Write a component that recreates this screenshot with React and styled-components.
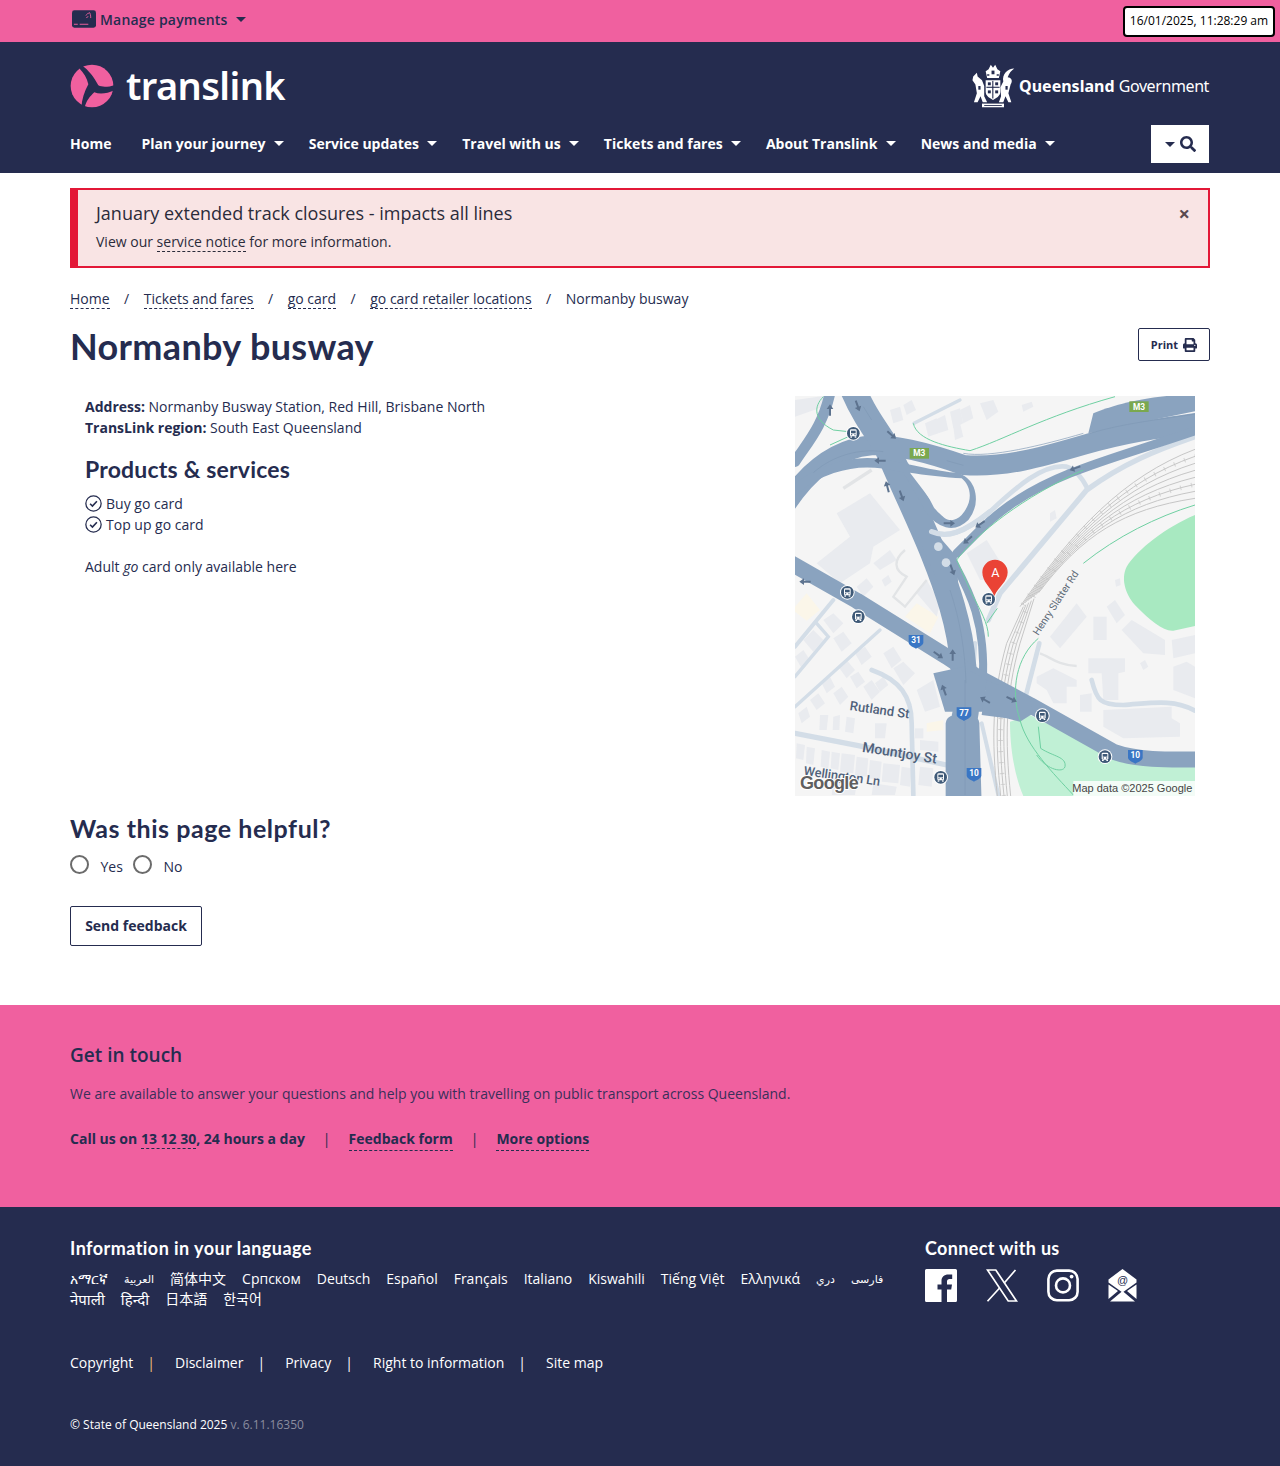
import React from "react"
import styled, { createGlobalStyle } from "styled-components"
import { FaSearch, FaPrint } from "react-icons/fa"

const NAVY = "#252c4f"
const PINK = "#f0609f"
const HEADING = `"Lato", "Noto Sans", sans-serif`

const Global = createGlobalStyle`
  html, body { margin: 0; padding: 0; background: #fff; }
  body { font-family: "Open Sans", "Noto Sans", "Noto Sans CJK SC", "DejaVu Sans", sans-serif; color: ${NAVY}; font-size: 14px; }
  * { box-sizing: border-box; }
`

const Container = styled.div`
  width: 1140px;
  margin: 0 auto;
`

const Top = styled.div`
  position: relative;
  height: 42px;
  background: ${PINK};
`
const TopInner = styled(Container)`
  height: 38px;
  display: flex;
  align-items: center;
  gap: 4px;
  padding-left: 2px;
  font-weight: 600;
  font-size: 14px;
  letter-spacing: 0.2px;
  color: ${NAVY};
`
const DateChip = styled.div`
  position: absolute;
  top: 6px;
  left: 1123px;
  width: 152px;
  height: 31px;
  background: #fff;
  border: 2px solid #000;
  border-radius: 4px;
  color: #000;
  font-size: 12px;
  line-height: 25px;
  text-align: center;
  white-space: nowrap;
`
const Caret = styled.span`
  display: inline-block;
  width: 0;
  height: 0;
  margin-left: ${p => p.$gap ?? 8}px;
  border-left: 5px solid transparent;
  border-right: 5px solid transparent;
  border-top: 5px solid ${p => p.$color || "#fff"};
`

const Header = styled.header`
  background: ${NAVY};
  height: 131px;
`
const BrandRow = styled(Container)`
  height: 83px;
  display: flex;
  justify-content: space-between;
  align-items: center;
  padding-top: 4px;
`
const Brand = styled.div`
  display: flex;
  align-items: center;
  gap: 11px;
`
const BrandName = styled.span`
  font-family: "Noto Sans", sans-serif;
  font-size: 38px;
  font-weight: 600;
  letter-spacing: -0.6px;
  color: #fff;
  line-height: 44px;
  margin-top: -2px;
`
const Gov = styled.div`
  display: flex;
  align-items: center;
  gap: 4px;
  color: #fff;
  font-family: "Noto Sans", sans-serif;
  font-size: 16px;
  margin-right: 1px;
  strong { font-weight: 700; }
`
const GovLight = styled.span`
  letter-spacing: -0.4px;
`
const NavRow = styled(Container)`
  display: flex;
  align-items: center;
  justify-content: space-between;
  height: 38px;
`
const Nav = styled.nav`
  display: flex;
  gap: 25.2px;
  margin-top: -2px;
`
const NavItem = styled.a`
  display: flex;
  align-items: center;
  color: #fff;
  font-weight: 700;
  font-size: 14px;
  white-space: nowrap;
  margin-right: ${p => p.$extra || 0}px;
`
const SearchBtn = styled.button`
  width: 58px;
  height: 38px;
  margin-right: 1px;
  background: #fff;
  border: 0;
  display: flex;
  align-items: center;
  justify-content: center;
  gap: 5px;
  color: ${NAVY};
  padding: 0;
`

const Main = styled(Container)`
  padding-top: 15px;
`
const Alert = styled.div`
  position: relative;
  height: 80px;
  background: #f9e4e4;
  border: 2px solid #e31837;
  border-left-width: 8px;
  padding: 11px 18px;
`
const AlertTitle = styled.div`
  font-size: 18px;
  line-height: 25px;
  color: #2b2b3a;
`
const AlertText = styled.div`
  font-size: 14px;
  line-height: 20px;
  margin-top: 6px;
  color: #2b2b3a;
`
const Dashed = styled.a`
  color: inherit;
  text-decoration: none;
  border-bottom: 1px dashed currentColor;
`
const Close = styled.span`
  position: absolute;
  right: 18px;
  top: 14px;
  font-size: 20px;
  line-height: 20px;
  font-weight: 700;
  color: #5a4a50;
`
const Crumbs = styled.div`
  display: flex;
  margin-top: 21px;
  line-height: 19px;
  font-size: 14px;
`
const Sep = styled.span`
  padding: 0 14.5px;
`
const TitleRow = styled.div`
  display: flex;
  justify-content: space-between;
  align-items: flex-start;
  margin-top: 7px;
  height: 80px;
`
const Title = styled.h1`
  margin: 0;
  font-family: ${HEADING};
  font-size: 36px;
  font-weight: 700;
  letter-spacing: 0.35px;
  line-height: 60px;
`
const PrintBtn = styled.button`
  margin-top: 12px;
  width: 72px;
  height: 33px;
  background: #fff;
  border: 1px solid ${NAVY};
  border-radius: 2px;
  display: flex;
  align-items: center;
  justify-content: center;
  gap: 5px;
  font: 700 11px "Open Sans", sans-serif;
  color: ${NAVY};
`
const Columns = styled.div`
  display: flex;
  justify-content: space-between;
  padding: 0 15px;
`
const Info = styled.div`
  line-height: 21px;
  font-size: 14px;
  b { font-weight: 700; }
`
const Sub = styled.h2`
  margin: 16px 0 0;
  font-family: ${HEADING};
  font-size: 23px;
  font-weight: 700;
  letter-spacing: 0.2px;
  line-height: 30px;
`
const Checks = styled.ul`
  list-style: none;
  margin: 9px 0 0;
  padding: 0;
`
const Check = styled.li`
  display: flex;
  align-items: center;
  gap: 4px;
  height: 21px;
`
const Note = styled.p`
  margin: 21px 0 0;
  line-height: 21px;
`
const Feedback = styled.div`
  margin-top: 16px;
`
const FeedbackTitle = styled.h2`
  margin: 0;
  font-family: ${HEADING};
  font-size: 25px;
  font-weight: 700;
  letter-spacing: 0.55px;
  line-height: 32px;
`
const Radios = styled.div`
  display: flex;
  align-items: center;
  height: 24px;
  margin-top: 9px;
`
const Radio = styled.span`
  width: 19px;
  height: 19px;
  border: 2px solid #6b6b6b;
  border-radius: 50%;
  margin-top: -2px;
`
const RadioLabel = styled.span`
  font-size: 14px;
  color: ${NAVY};
  margin: 2px 10px 0 11.5px;
`
const SendBtn = styled.button`
  display: block;
  margin-top: 29px;
  width: 132px;
  height: 40px;
  padding: 0 0 2px;
  background: #fff;
  border: 1px solid ${NAVY};
  border-radius: 2px;
  font: 700 14px "Open Sans", sans-serif;
  color: ${NAVY};
`
const Touch = styled.section`
  margin-top: 59px;
  height: 202px;
  background: ${PINK};
  padding-top: 36px;
`
const TouchTitle = styled.h3`
  margin: 0;
  font-size: 19px;
  font-weight: 600;
  line-height: 28px;
`
const TouchText = styled.p`
  margin: 14px 0 0;
  line-height: 22px;
  color: #3a2f5a;
`
const TouchLinks = styled.div`
  display: flex;
  margin-top: 23px;
  line-height: 22px;
  font-weight: 700;
`
const Bar = styled.span`
  font-weight: 400;
  padding: 0 18px;
`
const Foot = styled.footer`
  background: ${NAVY};
  height: 259px;
  color: #fff;
  padding-top: 27px;
`
const FootTop = styled(Container)`
  display: flex;
  justify-content: space-between;
  height: 91px;
`
const FootHead = styled.h3`
  margin: 0;
  font-family: ${HEADING};
  font-size: 18px;
  font-weight: 700;
  letter-spacing: ${p => p.$spacing || 0.45}px;
  line-height: 28px;
`
const Langs = styled.div`
  width: 820px;
  display: flex;
  flex-wrap: wrap;
  column-gap: 16px;
  margin-top: 7px;
  line-height: 20px;
  font-size: 14px;
`
const Lang = styled.span`
  font-size: ${p => p.$size || 14}px;
`
const Connect = styled.div`
  width: 285px;
`
const Socials = styled.div`
  display: flex;
  align-items: center;
  gap: 29px;
  margin-top: 6px;
  height: 34px;
`
const LegalRow = styled(Container)`
  display: flex;
  margin-top: 27px;
  line-height: 22px;
`
const LegalBar = styled.span`
  color: ${p => (p.$gold ? "#f2c078" : "#fff")};
  padding: 0 20px 0 14px;
`
const Copy = styled(Container)`
  margin-top: 41px;
  font-size: 12px;
  line-height: 20px;
  span { color: #8b8d9f; }
`

function Logo() {
  return (
    <svg width="45" height="44" viewBox="15 10 135 132" aria-hidden="true">
      <circle cx="81" cy="76" r="64" fill={PINK} />
      <path d="M50 13C72 30 86 48 100 74C115 82 135 78 158 70L158 84C130 99 106 102 88 95C74 108 62 122 58 146L49 144C50 118 58 92 70 71C66 52 56 36 42 22Z" fill={NAVY} />
    </svg>
  )
}

// rough drawing of the coat of arms
function Crest() {
  return (
    <svg width="44" height="44" viewBox="0 0 60 60" aria-hidden="true">
      <g fill="#fff">
        <path d="M3 17 L8 12 L9 17 L15 22 L18 30 L18 44 L22 52 L16 52 L13 44 L9 52 L4 52 L8 40 L6 28 L2 22Z" />
        <path d="M59 6 C50 6 42 14 44 24 L40 32 L41 44 L38 52 L44 52 L47 44 L51 52 L55 52 L51 40 L54 28 C58 22 54 18 50 18 C52 12 55 9 59 6Z" />
        <path d="M20 22 H40 V38 C40 44 34 47 30 49 C26 47 20 44 20 38Z" />
        <path d="M15 54 H45 V59 H15Z" />
        <path d="M20 10 L24 7 L27 1 L30 5 L33 1 L36 7 L40 10 L38 19 H22Z" />
      </g>
      <g fill={NAVY}>
        <rect x="29" y="23" width="1.5" height="24" />
        <rect x="21" y="31" width="18" height="1.5" />
        <rect x="23" y="25" width="4" height="4" />
        <rect x="33" y="25" width="4" height="4" />
        <rect x="23" y="36" width="4" height="4" />
        <rect x="33" y="36" width="4" height="4" />
        <rect x="18" y="56" width="24" height="1.2" />
        <rect x="28" y="9" width="4" height="5" />
        <rect x="22" y="14" width="3" height="2" />
        <rect x="35" y="14" width="3" height="2" />
        <rect x="10" y="30" width="3" height="5" />
        <rect x="47" y="30" width="3" height="5" />
      </g>
    </svg>
  )
}

function CardIcon() {
  return (
    <svg width="24" height="18" viewBox="0 0 25 18" aria-hidden="true">
      <rect width="25" height="18" rx="2.5" fill={NAVY} />
      <path d="M2 14.5h4M8 14.5h9" stroke={PINK} strokeWidth="1" />
      <path d="M15 8c.5-1 1-1.5 2-1.5M14.5 5.5c1-2 2-2.5 3.5-2.5M18 2c1 1 1.5 3 1.5 6" stroke={PINK} strokeWidth=".9" fill="none" />
    </svg>
  )
}

function CheckIcon() {
  return (
    <svg width="17" height="17" viewBox="0 0 16 16" fill="none" stroke={NAVY} aria-hidden="true">
      <circle cx="8" cy="8" r="7.2" strokeWidth="1.2" />
      <path d="M4.8 8.2l2.2 2.2 4.2-4.6" strokeWidth="1.5" />
    </svg>
  )
}

function FacebookIcon() {
  return (
    <svg width="32" height="33" viewBox="0 0 32 33" fill="#fff" aria-hidden="true">
      <path d="M1.5 0H30.5A1.5 1.5 0 0 1 32 1.5V31.5A1.5 1.5 0 0 1 30.5 33H22V20.5H26.2L27 15.5H22V12.5C22 11 22.8 10 24.5 10H27.2V5.5H23.5C19 5.5 16.5 8 16.5 12V15.5H12.5V20.5H16.5V33H1.5A1.5 1.5 0 0 1 0 31.5V1.5A1.5 1.5 0 0 1 1.5 0Z" />
    </svg>
  )
}

function XIcon() {
  return (
    <svg width="32" height="33" viewBox="0 0 32 33" fill="none" stroke="#fff" strokeWidth="1.7" aria-hidden="true">
      <path d="M1.5 1H9.8L30.5 32H22.2Z" />
      <path d="M29.5 1L18 14.2M13.6 19L1.5 32.3" />
    </svg>
  )
}

function InstagramIcon() {
  return (
    <svg width="32" height="33" viewBox="0 0 32 33" fill="none" stroke="#fff" strokeWidth="2.6" aria-hidden="true">
      <rect x="1.4" y="1.6" width="29.2" height="29.6" rx="8.5" />
      <circle cx="16" cy="16.4" r="7" />
      <circle cx="24.6" cy="7.6" r="1.9" fill="#fff" stroke="none" />
    </svg>
  )
}

function MailIcon() {
  return (
    <svg width="29" height="33" viewBox="0 0 29 33" aria-hidden="true">
      <path d="M14.5 0 L28.5 10.5 V13.5 L14.5 23.5 L.5 13.5 V10.5Z" fill="#fff" />
      <path d="M.5 15.5 L10 22 L.5 30Z M28.5 15.5 L19 22 L28.5 30Z M2 32.5 L14.5 22 L27 32.5Z" fill="#fff" />
      <text x="14.5" y="15" textAnchor="middle" fontFamily="Liberation Sans, sans-serif" fontSize="11" fill={NAVY}>@</text>
    </svg>
  )
}

const buildings = [
  "140,370 240,310 330,420 250,470 240,520 150,580 80,520 180,440",
  "300,60 330,50 340,90 310,100", "340,45 365,30 378,60 350,75", "405,100 440,85 445,130 415,140",
  "435,90 465,75 475,120 445,130", "490,110 510,100 520,140 495,150", "480,65 510,55 520,100 490,115",
  "510,60 540,45 550,85 520,100", "570,40 610,30 625,65 590,90", "695,45 725,35 730,50 700,65",
  "780,370 795,360 800,385 780,395", "530,490 590,450 640,530 600,570 570,570",
  "780,740 860,640 890,680 810,775", "910,680 950,680 950,750 910,750", "950,650 975,630 1005,675 980,700",
  "995,720 1025,690 1125,750 1125,795 1060,790", "1145,750 1215,735 1215,790 1150,805",
  "895,805 1005,805 1005,845 985,850 985,930 940,930 935,850 895,850",
  "740,860 790,835 860,870 860,890 830,890 830,940 790,940 770,900 740,880",
  "870,915 905,910 905,965 870,965", "940,960 1145,950 1145,985 1170,1000 1170,1040 1000,1045 940,1010",
  "1150,830 1190,815 1215,830 1215,925 1150,900", "975,570 990,565 992,585 978,590", "1050,820 1065,810 1075,830 1060,840",
  "250,520 300,480 320,510 270,540", "200,590 230,565 250,590 220,620", "275,570 295,555 305,575 285,590",
  "380,610 410,570 450,640 440,680", "15,30 100,18 130,40 15,80",
  "100,690 130,670 160,700 130,730", "130,745 160,725 185,760 155,785", "40,750 70,720 100,750 70,785",
  "15,800 40,780 60,810 35,835", "280,790 310,770 335,810 305,835", "310,835 340,815 375,850 340,885",
  "195,790 225,770 245,800 215,825", "145,830 170,810 195,840 170,865", "180,860 205,845 225,875 200,895",
  "220,890 245,870 270,905 245,930", "255,880 280,860 295,885 270,905", "95,880 120,860 135,890 110,910",
  "130,910 155,890 175,920 150,945", "60,930 85,910 105,940 80,960", "25,970 50,950 60,980 35,1000",
  "90,975 115,975 110,1020 88,1020", "130,980 150,975 148,1020 128,1020", "170,980 195,985 190,1030 165,1025",
  "255,1000 290,1000 285,1045 255,1045", "380,900 430,870 450,950 405,965", "375,1015 400,1015 400,1045 375,1045",
  "390,1050 445,1055 445,1085 390,1080", "20,1060 45,1065 40,1110 18,1105", "50,1070 75,1075 70,1125 48,1120",
  "95,1080 120,1085 115,1135 92,1130", "125,1085 150,1090 145,1140 122,1135", "155,1090 195,1095 190,1150 150,1145",
  "200,1100 235,1105 230,1160 195,1155", "240,1110 275,1115 270,1170 235,1165", "280,1120 330,1125 325,1180 275,1175",
  "335,1130 365,1135 360,1190 330,1185", "390,1130 430,1135 425,1190 385,1185", "130,1165 200,1180 195,1215 125,1215",
  "250,1180 320,1190 315,1215 245,1215",
]
const minorRoads = [
  ["M15 1030L220 1070L470 1125", 16], ["M15 950L270 720", 10], ["M245 840C330 870 365 920 365 1000L370 1215", 14],
  ["M130 630L15 770", 12], ["M80 700L115 740L15 860", 10], ["M575 1000L625 1215", 12], ["M748 760L708 915", 14],
  ["M905 870C920 930 930 945 1000 945C1080 940 1150 925 1215 962", 14], ["M372 100L510 30", 10],
  ["M425 425C470 445 520 430 600 365C680 290 760 220 830 230C860 240 880 270 892 295", 14],
  ["M595 690L630 610L890 300C1000 220 1100 180 1215 140", 16], ["M555 760L550 830", 14],
]
const greenLines = [
  "M100 20C70 50 70 90 130 120L175 125M120 165L175 140", "M370 100C380 150 470 170 540 182C640 150 760 80 975 20",
  "M500 510C560 430 700 320 880 240", "M500 510L545 610C570 660 595 700 595 740", "M745 745C680 800 660 900 690 990C710 1070 790 1150 850 1215",
  "M1215 345C1100 380 980 440 880 520", "M745 1010L752 1075C790 1100 830 1100 825 1130C820 1150 770 1140 740 1095",
  "M590 700L622 655",
]
const laneLines = [
  "M70 248C130 195 210 175 280 185", "M520 190C600 205 760 165 880 130", "M470 212L520 226", "M220 50L245 90",
  "M480 600C510 690 525 780 528 880", "M525 870L525 1215", "M900 130C1000 100 1100 90 1215 72",
]
const arrows = [
  [120, 60, 0], [203, 48, 160], [305, 135, 130], [270, 212, 270], [292, 290, -15], [335, 318, 160], [478, 400, 90],
  [570, 403, 235], [533, 450, 230], [487, 540, 160], [45, 575, 270], [445, 795, 125], [488, 795, 0], [462, 900, -20],
  [585, 930, -60], [665, 928, 115], [855, 235, 250],
]
const stops = [[190, 130], [172, 607], [205, 680], [596, 628], [757, 977], [945, 1100], [452, 1162]]
const shields = [[378, 753, "31"], [522, 970, "77"], [552, 1152, "10"], [1036, 1098, "10"]]
const MAPFONT = "Roboto, Liberation Sans, sans-serif"

function railPath(i) {
  return `M${622 + i * 10} 1218C${605 + i * 10} 1050 ${605 + i * 10} 920 ${650 + i * 10} 760L${700 + i * 8} ${650 - i * 6}`
}
function yardPath(i) {
  return `M${690 + i * 8} ${650 - i * 6}C${850 + i * 4} ${420 + i * 2} 1000 ${260 + i * 14} 1215 ${178 + i * 21}`
}

function BusStop({ x, y }) {
  return (
    <g transform={`translate(${x} ${y})`}>
      <circle r="22" fill="#fff" />
      <circle r="19" fill="#3f5a78" />
      <rect x="-10" y="-12" width="20" height="21" rx="4" fill="#fff" />
      <rect x="-7" y="-8" width="14" height="8" fill="#3f5a78" />
      <circle cx="-5" cy="4" r="2" fill="#3f5a78" />
      <circle cx="5" cy="4" r="2" fill="#3f5a78" />
      <rect x="-9" y="9" width="5" height="4" fill="#fff" />
      <rect x="4" y="9" width="5" height="4" fill="#fff" />
    </g>
  )
}

function RouteShield({ x, y, label }) {
  return (
    <g transform={`translate(${x} ${y})`}>
      <path d="M-22 -18H22V6C18 16 8 18 0 23C-8 18 -18 16 -22 6Z" fill="#3a76c4" />
      <text y="7" textAnchor="middle" fontFamily={MAPFONT} fontWeight="700" fontSize="25" fill="#fff">{label}</text>
    </g>
  )
}

function MotorwaySign({ x, y }) {
  return (
    <g transform={`translate(${x} ${y})`}>
      <rect x="-29" y="-16" width="58" height="32" fill="#7aa84f" />
      <text y="9" textAnchor="middle" fontFamily={MAPFONT} fontWeight="700" fontSize="25" fill="#fff">M3</text>
    </g>
  )
}

function MapDrawing() {
  const road = "#8aa3bf"
  return (
    <svg width="400" height="400" viewBox="15 18 1200 1200" aria-label="Map" style={{ flex: "none" }}>
      <defs>
        <clipPath id="mapclip"><rect x="15" y="18" width="1200" height="1200" /></clipPath>
      </defs>
      <g clipPath="url(#mapclip)">
        <rect x="15" y="18" width="1200" height="1200" fill="#f5f5f5" />
        <path d="M1215 375C1130 410 1040 480 1010 530C990 570 1010 620 1040 650C1080 690 1120 725 1150 722L1215 708Z" fill="#a8e9c1" />
        <path d="M660 995L720 975L1000 1115L1215 1130V1218H700C670 1150 660 1060 660 995Z" fill="#c0f0d5" />
        <g fill="#fbf6e9">
          <polygon points="15,650 50,610 90,660 50,692 15,665" />
          <polygon points="345,680 380,640 445,680 420,730" />
          <polygon points="410,1000 460,990 460,1020 410,1025" />
        </g>
        <g fill="#e9ebef">
          {buildings.map((b, i) => <polygon key={i} points={b} />)}
        </g>
        <g fill="none" stroke="#e2e4e6" strokeWidth="7">
          <path d="M160 295L245 240" strokeWidth="10" />
          <path d="M345 480C310 510 310 540 350 560L310 620L345 650L410 570" />
          <path d="M750 790C780 800 800 825 860 828" />
        </g>
        <g fill="none" stroke="#d3dde7" strokeLinecap="round">
          {minorRoads.map(([d, w], i) => <path key={i} d={d} strokeWidth={w} />)}
        </g>
        <g fill="none" stroke="#c6c6c6" strokeWidth="3">
          {[0, 1, 2, 3, 4].map(i => <path key={i} d={railPath(i)} />)}
          {[0, 1, 2, 3, 4, 5, 6, 7].map(i => <path key={i} d={yardPath(i)} />)}
        </g>
        <g fill="none" stroke="#c6c6c6" strokeWidth="14" strokeDasharray="3 30" opacity=".7">
          <path d={railPath(2)} />
          <path d={yardPath(1)} />
          <path d={yardPath(5)} />
        </g>
        <g fill="none" stroke={road} strokeLinejoin="round" strokeLinecap="round">
          <path d="M-10 340C50 250 130 175 250 165C330 165 420 190 520 225C640 235 760 200 880 165C1000 130 1100 115 1245 95" strokeWidth="60" />
          <path d="M15 215C50 160 100 110 122 0" strokeWidth="32" />
          <path d="M190 0C220 70 250 110 290 170C340 290 390 390 430 490C470 590 510 700 520 830C530 900 535 950 520 1000L520 1245" strokeWidth="78" />
          <path d="M15 300C70 250 170 205 280 222C360 235 440 260 500 262C550 280 555 340 525 380C490 415 450 400 420 360C400 320 370 270 345 230" strokeWidth="28" />
          <path d="M490 515C530 590 590 690 578 880" strokeWidth="24" />
          <path d="M-10 512L200 632L470 800L560 860L720 945L970 1085C1040 1110 1120 1110 1245 1108" strokeWidth="48" />
          <path d="M1245 112C1080 170 950 205 840 250C740 290 640 350 570 420L500 490" strokeWidth="26" />
          <path d="M490 1000L490 1245M545 1000L552 1245" strokeWidth="46" />
        </g>
        <g fill={road}>
          <path d="M895 130L910 70C960 50 1020 30 1130 18H1225V62Z" />
          <path d="M375 420L430 420L500 500L505 590L450 590Z" />
          <path d="M430 850L465 965L580 965L590 870L520 830Z" />
          <path d="M590 870L720 925L730 970L690 995L650 985L575 975Z" />
        </g>
        <path d="M360 248C400 255 470 262 515 265C545 290 550 335 515 375C495 395 470 398 450 370C430 340 385 280 360 248Z" fill="#f5f5f5" />
        <g fill="none" stroke="#7f98b5" strokeWidth="2">
          {laneLines.map((d, i) => <path key={i} d={d} />)}
        </g>
        <g fill="#d3dde7">
          <circle cx="445" cy="470" r="13" />
          <circle cx="468" cy="518" r="13" />
        </g>
        <path d="M425 425C470 445 520 430 600 365" fill="none" stroke="#d3dde7" strokeWidth="16" strokeLinecap="round" />
        <g fill="none" stroke="#6fd0a2" strokeWidth="3">
          {greenLines.map((d, i) => <path key={i} d={d} />)}
        </g>
        <g fill="#5d738f">
          {arrows.map(([x, y, r], i) => (
            <path key={i} transform={`translate(${x} ${y}) rotate(${r})`} d="M0 -17L10 -3H3V17H-3V-3H-10Z" />
          ))}
        </g>
        <MotorwaySign x={1047} y={50} />
        <MotorwaySign x={388} y={190} />
        {shields.map(([x, y, l], i) => <RouteShield key={i} x={x} y={y} label={l} />)}
        {stops.map(([x, y], i) => <BusStop key={i} x={x} y={y} />)}
        <path d="M613 618C600 590 577 575 577 547A38 38 0 0 1 653 547C653 575 626 590 613 618Z" fill="#ea4335" />
        <text x="616" y="560" textAnchor="middle" fontFamily={MAPFONT} fontSize="38" fill="#fff">A</text>
        <g fontFamily={MAPFONT} fontWeight="500" fill="#4f617a">
          <text transform="translate(178 960) rotate(8)" fontSize="39">Rutland St</text>
          <text transform="translate(215 1085) rotate(9)" fontSize="42">Mountjoy St</text>
          <text transform="translate(40 1155) rotate(8)" fontSize="38">Wellington Ln</text>
        </g>
        <text transform="translate(745 738) rotate(-57)" fontFamily={MAPFONT} fontSize="31" fill="#5f6b78">Henry Slatter Rd</text>
        <text x="30" y="1198" fontFamily="Liberation Sans, sans-serif" fontWeight="700" fontSize="54" letterSpacing="-2" fill="#5f5f5f" stroke="#fff" strokeWidth="6" paintOrder="stroke">Google</text>
        <rect x="850" y="1173" width="365" height="45" fill="#fff" opacity=".8" />
        <text x="1207" y="1206" textAnchor="end" fontFamily="Liberation Sans, sans-serif" fontSize="33" fill="#444">Map data ©2025 Google</text>
      </g>
    </svg>
  )
}

const navItems = ["Plan your journey", "Service updates", "Travel with us", "Tickets and fares", "About Translink", "News and media"]
const langs = [
  ["አማርኛ"], ["العربية", 11], ["简体中文"], ["Српском"], ["Deutsch"], ["Español"], ["Français"], ["Italiano"], ["Kiswahili"],
  ["Tiếng Việt"], ["Ελληνικά"], ["دري", 11], ["فارسی", 11], ["नेपाली", 15], ["हिन्दी", 15], ["日本語"], ["한국어"],
]
const legal = ["Copyright", "Disclaimer", "Privacy", "Right to information"]

export default function App() {
  return (
    <>
      <Global />
      <Top>
        <TopInner>
          <CardIcon />
          Manage payments
          <Caret $color={NAVY} $gap={4} />
        </TopInner>
        <DateChip>16/01/2025, 11:28:29 am</DateChip>
      </Top>
      <Header>
        <BrandRow>
          <Brand>
            <Logo />
            <BrandName>translink</BrandName>
          </Brand>
          <Gov>
            <Crest />
            <span><strong>Queensland</strong> <GovLight>Government</GovLight></span>
          </Gov>
        </BrandRow>
        <NavRow>
          <Nav>
            <NavItem $extra={4.8}>Home</NavItem>
            {navItems.map(n => <NavItem key={n}>{n}<Caret /></NavItem>)}
          </Nav>
          <SearchBtn aria-label="Search">
            <Caret $color={NAVY} $gap={0} />
            <FaSearch size={16} />
          </SearchBtn>
        </NavRow>
      </Header>
      <Main>
        <Alert>
          <AlertTitle>January extended track closures - impacts all lines</AlertTitle>
          <AlertText>View our <Dashed>service notice</Dashed> for more information.</AlertText>
          <Close>×</Close>
        </Alert>
        <Crumbs>
          <Dashed>Home</Dashed><Sep>/</Sep>
          <Dashed>Tickets and fares</Dashed><Sep>/</Sep>
          <Dashed>go card</Dashed><Sep>/</Sep>
          <Dashed>go card retailer locations</Dashed><Sep>/</Sep>
          <span>Normanby busway</span>
        </Crumbs>
        <TitleRow>
          <Title>Normanby busway</Title>
          <PrintBtn>Print <FaPrint size={14} /></PrintBtn>
        </TitleRow>
        <Columns>
          <Info>
            <div><b>Address:</b> Normanby Busway Station, Red Hill, Brisbane North</div>
            <div><b>TransLink region:</b> South East Queensland</div>
            <Sub>Products &amp; services</Sub>
            <Checks>
              <Check><CheckIcon />Buy go card</Check>
              <Check><CheckIcon />Top up go card</Check>
            </Checks>
            <Note>Adult <i>go</i> card only available here</Note>
          </Info>
          <MapDrawing />
        </Columns>
        <Feedback>
          <FeedbackTitle>Was this page helpful?</FeedbackTitle>
          <Radios>
            <Radio /><RadioLabel>Yes</RadioLabel>
            <Radio /><RadioLabel>No</RadioLabel>
          </Radios>
          <SendBtn>Send feedback</SendBtn>
        </Feedback>
      </Main>
      <Touch>
        <Container>
          <TouchTitle>Get in touch</TouchTitle>
          <TouchText>We are available to answer your questions and help you with travelling on public transport across Queensland.</TouchText>
          <TouchLinks>
            <span>Call us on <Dashed>13 12 30</Dashed>, 24 hours a day</span>
            <Bar>|</Bar>
            <Dashed>Feedback form</Dashed>
            <Bar>|</Bar>
            <Dashed>More options</Dashed>
          </TouchLinks>
        </Container>
      </Touch>
      <Foot>
        <FootTop>
          <div>
            <FootHead>Information in your language</FootHead>
            <Langs>{langs.map(([l, size]) => <Lang key={l} $size={size}>{l}</Lang>)}</Langs>
          </div>
          <Connect>
            <FootHead $spacing={0.33}>Connect with us</FootHead>
            <Socials>
              <FacebookIcon />
              <XIcon />
              <InstagramIcon />
              <MailIcon />
            </Socials>
          </Connect>
        </FootTop>
        <LegalRow>
          {legal.map((l, i) => (
            <React.Fragment key={l}>
              <span>{l}</span>
              <LegalBar $gold={i === 0}>|</LegalBar>
            </React.Fragment>
          ))}
          <span>Site map</span>
        </LegalRow>
        <Copy>© State of Queensland 2025 <span>v. 6.11.16350</span></Copy>
      </Foot>
    </>
  )
}
